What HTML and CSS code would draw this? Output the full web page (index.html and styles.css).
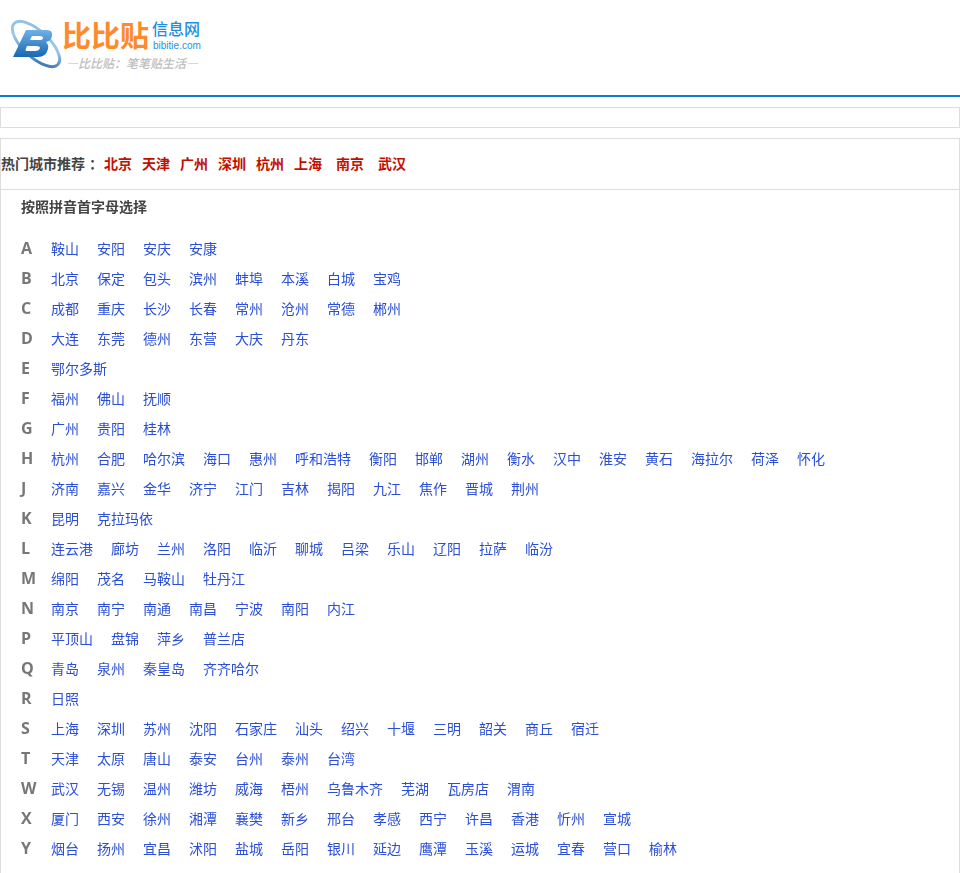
FILE: index.html
```html
<!DOCTYPE html>
<html lang="zh-CN">
<head>
<meta charset="utf-8">
<title>比比贴信息网 - 城市选择</title>
<link rel="stylesheet" href="styles.css">
</head>
<body>
<header class="top">
  <a class="logo" href="#">
    <svg width="200" height="62" viewBox="0 0 200 62" xmlns="http://www.w3.org/2000/svg">
      <defs>
        <linearGradient id="ring" x1="0" y1="0" x2="1" y2="1">
          <stop offset="0" stop-color="#8fbfe6"/>
          <stop offset="0.5" stop-color="#9cc6e8"/>
          <stop offset="1" stop-color="#1f5f9e"/>
        </linearGradient>
        <linearGradient id="bee" x1="0" y1="0" x2="0" y2="1">
          <stop offset="0" stop-color="#6fb1e6"/>
          <stop offset="1" stop-color="#1668b4"/>
        </linearGradient>
      </defs>
      <ellipse cx="34" cy="33" rx="30" ry="13" transform="rotate(43 34 33)" fill="none" stroke="url(#ring)" stroke-width="3"/>
      <path fill-rule="evenodd" fill="url(#bee)" d="M24 19 H45 Q51 19 50 25 Q49 30 44 31 Q47 34 46 38 Q44 46 36 46 H11 Z M30 25 L28 29 H37 Q41 29 41 27 Q41 25 38 25 Z M25 35 L23 40 H33 Q37 40 38 37 Q38 35 34 35 Z"/>
      <text class="logo-name" x="60" y="36">比比贴</text>
      <text class="logo-site" x="150" y="24">信息网</text>
      <text class="logo-domain" x="151" y="38">bibitie.com</text>
      <text class="logo-slogan" x="64" y="57">—比比贴：笔笔贴生活—</text>
    </svg>
  </a>
</header>

<div class="ad-box"></div>

<main class="city-box">
  <div class="hot">
    <span class="hot-label">热门城市推荐<span class="colon">：</span></span>
    <a href="#">北京</a><a href="#">天津</a><a href="#">广州</a><a href="#">深圳</a><a href="#">杭州</a><a class="wide" href="#">上海</a><a class="wide" href="#">南京</a><a href="#">武汉</a>
  </div>
  <div class="list">
    <h2 class="list-title">按照拼音首字母选择</h2>
    <dl class="row"><dt>A</dt><dd><a href="#">鞍山</a><a href="#">安阳</a><a href="#">安庆</a><a href="#">安康</a></dd></dl>
    <dl class="row"><dt>B</dt><dd><a href="#">北京</a><a href="#">保定</a><a href="#">包头</a><a href="#">滨州</a><a href="#">蚌埠</a><a href="#">本溪</a><a href="#">白城</a><a href="#">宝鸡</a></dd></dl>
    <dl class="row"><dt>C</dt><dd><a href="#">成都</a><a href="#">重庆</a><a href="#">长沙</a><a href="#">长春</a><a href="#">常州</a><a href="#">沧州</a><a href="#">常德</a><a href="#">郴州</a></dd></dl>
    <dl class="row"><dt>D</dt><dd><a href="#">大连</a><a href="#">东莞</a><a href="#">德州</a><a href="#">东营</a><a href="#">大庆</a><a href="#">丹东</a></dd></dl>
    <dl class="row"><dt>E</dt><dd><a href="#">鄂尔多斯</a></dd></dl>
    <dl class="row"><dt>F</dt><dd><a href="#">福州</a><a href="#">佛山</a><a href="#">抚顺</a></dd></dl>
    <dl class="row"><dt>G</dt><dd><a href="#">广州</a><a href="#">贵阳</a><a href="#">桂林</a></dd></dl>
    <dl class="row"><dt>H</dt><dd><a href="#">杭州</a><a href="#">合肥</a><a href="#">哈尔滨</a><a href="#">海口</a><a href="#">惠州</a><a href="#">呼和浩特</a><a href="#">衡阳</a><a href="#">邯郸</a><a href="#">湖州</a><a href="#">衡水</a><a href="#">汉中</a><a href="#">淮安</a><a href="#">黄石</a><a href="#">海拉尔</a><a href="#">荷泽</a><a href="#">怀化</a></dd></dl>
    <dl class="row"><dt>J</dt><dd><a href="#">济南</a><a href="#">嘉兴</a><a href="#">金华</a><a href="#">济宁</a><a href="#">江门</a><a href="#">吉林</a><a href="#">揭阳</a><a href="#">九江</a><a href="#">焦作</a><a href="#">晋城</a><a href="#">荆州</a></dd></dl>
    <dl class="row"><dt>K</dt><dd><a href="#">昆明</a><a href="#">克拉玛依</a></dd></dl>
    <dl class="row"><dt>L</dt><dd><a href="#">连云港</a><a href="#">廊坊</a><a href="#">兰州</a><a href="#">洛阳</a><a href="#">临沂</a><a href="#">聊城</a><a href="#">吕梁</a><a href="#">乐山</a><a href="#">辽阳</a><a href="#">拉萨</a><a href="#">临汾</a></dd></dl>
    <dl class="row"><dt>M</dt><dd><a href="#">绵阳</a><a href="#">茂名</a><a href="#">马鞍山</a><a href="#">牡丹江</a></dd></dl>
    <dl class="row"><dt>N</dt><dd><a href="#">南京</a><a href="#">南宁</a><a href="#">南通</a><a href="#">南昌</a><a href="#">宁波</a><a href="#">南阳</a><a href="#">内江</a></dd></dl>
    <dl class="row"><dt>P</dt><dd><a href="#">平顶山</a><a href="#">盘锦</a><a href="#">萍乡</a><a href="#">普兰店</a></dd></dl>
    <dl class="row"><dt>Q</dt><dd><a href="#">青岛</a><a href="#">泉州</a><a href="#">秦皇岛</a><a href="#">齐齐哈尔</a></dd></dl>
    <dl class="row"><dt>R</dt><dd><a href="#">日照</a></dd></dl>
    <dl class="row"><dt>S</dt><dd><a href="#">上海</a><a href="#">深圳</a><a href="#">苏州</a><a href="#">沈阳</a><a href="#">石家庄</a><a href="#">汕头</a><a href="#">绍兴</a><a href="#">十堰</a><a href="#">三明</a><a href="#">韶关</a><a href="#">商丘</a><a href="#">宿迁</a></dd></dl>
    <dl class="row"><dt>T</dt><dd><a href="#">天津</a><a href="#">太原</a><a href="#">唐山</a><a href="#">泰安</a><a href="#">台州</a><a href="#">泰州</a><a href="#">台湾</a></dd></dl>
    <dl class="row"><dt>W</dt><dd><a href="#">武汉</a><a href="#">无锡</a><a href="#">温州</a><a href="#">潍坊</a><a href="#">威海</a><a href="#">梧州</a><a href="#">乌鲁木齐</a><a href="#">芜湖</a><a href="#">瓦房店</a><a href="#">渭南</a></dd></dl>
    <dl class="row"><dt>X</dt><dd><a href="#">厦门</a><a href="#">西安</a><a href="#">徐州</a><a href="#">湘潭</a><a href="#">襄樊</a><a href="#">新乡</a><a href="#">邢台</a><a href="#">孝感</a><a href="#">西宁</a><a href="#">许昌</a><a href="#">香港</a><a href="#">忻州</a><a href="#">宣城</a></dd></dl>
    <dl class="row"><dt>Y</dt><dd><a href="#">烟台</a><a href="#">扬州</a><a href="#">宜昌</a><a href="#">沭阳</a><a href="#">盐城</a><a href="#">岳阳</a><a href="#">银川</a><a href="#">延边</a><a href="#">鹰潭</a><a href="#">玉溪</a><a href="#">运城</a><a href="#">宜春</a><a href="#">营口</a><a href="#">榆林</a></dd></dl>
  </div>
</main>
</body>
</html>
```
FILE: styles.css
```css
* { box-sizing: border-box; }
html, body { margin: 0; padding: 0; background: #fff; }
body {
  height: 873px;
  overflow: hidden;
  font: 14px/30px "Open Sans", "Noto Sans CJK SC", sans-serif;
  color: #444;
}
a { text-decoration: none; }

.top {
  height: 97px;
  border-bottom: 2px solid #0a7fd2;
  padding-top: 11px;
}
.logo { display: block; width: 200px; height: 62px; margin-left: 2px; }
.logo svg { display: block; }
.logo text { font-family: "Noto Sans CJK SC", sans-serif; }
.logo-name { font-size: 29px; font-weight: 700; fill: #ff8a2b; }
.logo-site { font-size: 16px; font-weight: 500; fill: #1f8fe0; }
.logo .logo-domain { font-family: "Liberation Sans", sans-serif; font-size: 10px; fill: #1f8fe0; }
.logo-slogan { font-size: 12px; font-weight: 500; font-style: italic; fill: #bdbdbd; }

.ad-box {
  height: 21px;
  margin-top: 10px;
  border: 1px solid #ddd;
}

.city-box {
  margin-top: 10px;
  border: 1px solid #ddd;
  height: 800px;
}
.hot {
  height: 51px;
  line-height: 50px;
  border-bottom: 1px solid #ddd;
  display: flex;
  white-space: nowrap;
}
.hot-label { font-weight: 700; width: 103px; }
.colon { padding-left: 4px; }
.hot a { color: #c30f00; font-weight: 700; margin-right: 10px; }
.hot a.wide { margin-right: 14px; }

.list { padding: 2px 20px 0; will-change: transform; }
.list-title {
  margin: 0 0 12px;
  font-size: 14px;
  font-weight: 700;
  line-height: 30px;
}
.row { display: flex; margin: 0; height: 30px; }
.row dt {
  width: 30px;
  font-size: 16px;
  font-weight: 700;
  line-height: 28px;
  color: #777;
}
.row dd { margin: 0; display: flex; }
.row a { color: #2a4fd6; margin-right: 18px; }
```
